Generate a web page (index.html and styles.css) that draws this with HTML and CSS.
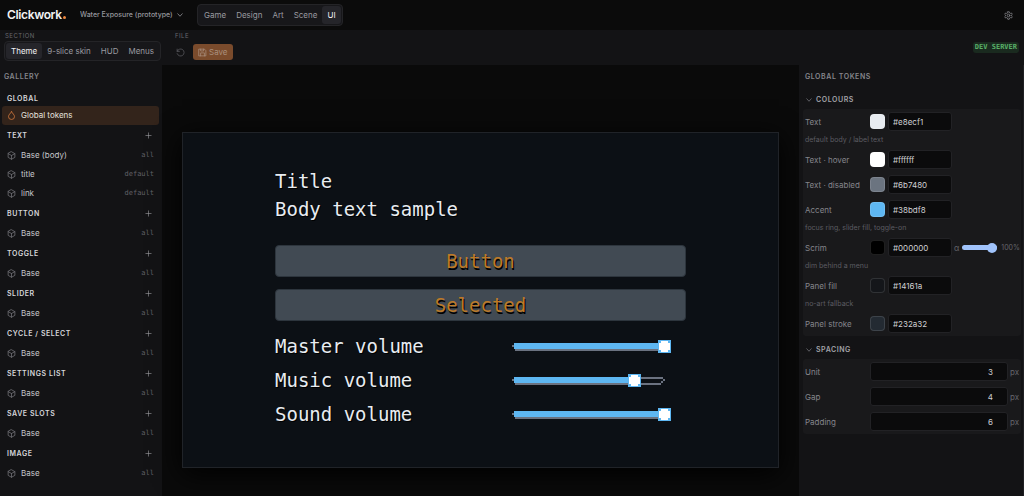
FILE: index.html
```html
<!DOCTYPE html>
<html lang="en">
<head>
    <meta charset="UTF-8">
    <meta name="viewport" content="width=device-width, initial-scale=1.0">
    <title>Clickwork</title>
    <link rel="stylesheet" href="styles.css">
</head>
<body>
    <svg class="defs" width="0" height="0" aria-hidden="true">
        <symbol id="cube" viewBox="0 0 24 24"><path d="M12 2 21 7v10l-9 5-9-5V7z M3 7l9 5 9-5 M12 12v10"/></symbol>
        <symbol id="plus" viewBox="0 0 24 24"><path d="M12 3v18M3 12h18"/></symbol>
        <symbol id="chevron" viewBox="0 0 24 24"><path d="m3 7 9 10 9-10"/></symbol>
    </svg>

    <header class="topbar">
        <div class="logo">Clickwork<span class="dot"></span></div>
        <div class="project">
            <select class="project-select" aria-label="Project">
                <option>Water Exposure (prototype)</option>
            </select>
            <svg class="icon chevron"><use href="#chevron"/></svg>
        </div>
        <nav class="tabs">
            <button class="tab">Game</button>
            <button class="tab">Design</button>
            <button class="tab">Art</button>
            <button class="tab">Scene</button>
            <button class="tab active">UI</button>
        </nav>
        <button class="icon-btn settings" aria-label="Settings">
            <svg class="icon gear" viewBox="0 0 24 24"><path d="M10 2h4l.7 3 2.300 1.300 3-.9 2 3.500L19.800 11v2l2.200 2.100-2 3.500-3-.9-2.300 1.300-.7 3h-4l-.7-3L7 17.700l-3 .9-2-3.500L4.200 13v-2L2 8.900l2-3.500 3 .9L9.300 5z"/><circle cx="12" cy="12" r="3.500"/></svg>
        </button>
    </header>

    <div class="toolbar">
        <div class="tool-group section-group">
            <span class="tool-label">SECTION</span>
            <div class="tabs">
                <button class="tab active">Theme</button>
                <button class="tab">9-slice skin</button>
                <button class="tab">HUD</button>
                <button class="tab">Menus</button>
            </div>
        </div>
        <div class="tool-group">
            <span class="tool-label">FILE</span>
            <div class="file-actions">
                <button class="icon-btn revert" aria-label="Revert">
                    <svg class="icon" viewBox="0 0 24 24"><path d="M3 3v6h6M3 9a9.500 9.500 0 1 1 0 6"/></svg>
                </button>
                <button class="save">
                    <svg class="icon" viewBox="0 0 24 24"><path d="M3 3h14l4 4v14H3zM7 3v5h8V3M7 21v-8h10v8"/></svg>
                    Save
                </button>
            </div>
        </div>
        <span class="badge">DEV SERVER</span>
    </div>

    <div class="workspace">
        <aside class="gallery">
            <h2 class="panel-title">GALLERY</h2>
            <div class="group-head">GLOBAL</div>
            <button class="item selected">
                <svg class="icon" viewBox="0 0 24 24"><path d="M12 2C9 7 4 10 4 15a8 7.500 0 0 0 16 0c0-5-5-8-8-13z"/></svg>
                Global tokens
            </button>

            <div class="group-head">TEXT<button class="add" aria-label="Add text"><svg class="icon"><use href="#plus"/></svg></button></div>
            <button class="item"><svg class="icon"><use href="#cube"/></svg>Base (body)<span class="tag">all</span></button>
            <button class="item"><svg class="icon"><use href="#cube"/></svg>title<span class="tag">default</span></button>
            <button class="item"><svg class="icon"><use href="#cube"/></svg>link<span class="tag">default</span></button>

            <div class="group-head">BUTTON<button class="add" aria-label="Add button"><svg class="icon"><use href="#plus"/></svg></button></div>
            <button class="item"><svg class="icon"><use href="#cube"/></svg>Base<span class="tag">all</span></button>

            <div class="group-head">TOGGLE<button class="add" aria-label="Add toggle"><svg class="icon"><use href="#plus"/></svg></button></div>
            <button class="item"><svg class="icon"><use href="#cube"/></svg>Base<span class="tag">all</span></button>

            <div class="group-head">SLIDER<button class="add" aria-label="Add slider"><svg class="icon"><use href="#plus"/></svg></button></div>
            <button class="item"><svg class="icon"><use href="#cube"/></svg>Base<span class="tag">all</span></button>

            <div class="group-head">CYCLE / SELECT<button class="add" aria-label="Add select"><svg class="icon"><use href="#plus"/></svg></button></div>
            <button class="item"><svg class="icon"><use href="#cube"/></svg>Base<span class="tag">all</span></button>

            <div class="group-head">SETTINGS LIST<button class="add" aria-label="Add settings list"><svg class="icon"><use href="#plus"/></svg></button></div>
            <button class="item"><svg class="icon"><use href="#cube"/></svg>Base<span class="tag">all</span></button>

            <div class="group-head">SAVE SLOTS<button class="add" aria-label="Add save slots"><svg class="icon"><use href="#plus"/></svg></button></div>
            <button class="item"><svg class="icon"><use href="#cube"/></svg>Base<span class="tag">all</span></button>

            <div class="group-head">IMAGE<button class="add" aria-label="Add image"><svg class="icon"><use href="#plus"/></svg></button></div>
            <button class="item"><svg class="icon"><use href="#cube"/></svg>Base<span class="tag">all</span></button>
        </aside>

        <main class="stage">
            <div class="preview">
                <div class="game-text">Title</div>
                <div class="game-text">Body text sample</div>
                <div class="game-buttons">
                    <button class="game-btn">Button</button>
                    <button class="game-btn">Selected</button>
                </div>
                <div class="game-row">
                    <label for="master">Master volume</label>
                    <input id="master" class="game-slider" type="range" value="100" style="--value: 1">
                </div>
                <div class="game-row">
                    <label for="music">Music volume</label>
                    <input id="music" class="game-slider" type="range" value="80" style="--value: 0.8">
                </div>
                <div class="game-row">
                    <label for="sound">Sound volume</label>
                    <input id="sound" class="game-slider" type="range" value="100" style="--value: 1">
                </div>
            </div>
        </main>

        <aside class="inspector">
            <h2 class="panel-title">GLOBAL TOKENS</h2>

            <button class="fold"><svg class="icon chevron"><use href="#chevron"/></svg>COLOURS</button>
            <div class="fields">
                <div class="field">
                    <label for="text">Text</label>
                    <input class="swatch" type="color" value="#e8ecf1" aria-label="Text colour">
                    <input id="text" class="hex" type="text" value="#e8ecf1">
                </div>
                <p class="hint">default body / label text</p>
                <div class="field">
                    <label for="hover">Text · hover</label>
                    <input class="swatch" type="color" value="#ffffff" aria-label="Hover colour">
                    <input id="hover" class="hex" type="text" value="#ffffff">
                </div>
                <div class="field">
                    <label for="disabled">Text · disabled</label>
                    <input class="swatch" type="color" value="#6b7480" aria-label="Disabled colour">
                    <input id="disabled" class="hex" type="text" value="#6b7480">
                </div>
                <div class="field">
                    <label for="accent">Accent</label>
                    <input class="swatch" type="color" value="#5eb7f2" aria-label="Accent colour">
                    <input id="accent" class="hex" type="text" value="#38bdf8">
                </div>
                <p class="hint">focus ring, slider fill, toggle-on</p>
                <div class="field">
                    <label for="scrim">Scrim</label>
                    <input class="swatch" type="color" value="#000000" aria-label="Scrim colour">
                    <input id="scrim" class="hex" type="text" value="#000000">
                    <label class="unit" for="alpha">α</label>
                    <input id="alpha" class="alpha" type="range" value="100">
                    <span class="unit">100%</span>
                </div>
                <p class="hint">dim behind a menu</p>
                <div class="field">
                    <label for="fill">Panel fill</label>
                    <input class="swatch" type="color" value="#14161a" aria-label="Panel fill colour">
                    <input id="fill" class="hex" type="text" value="#14161a">
                </div>
                <p class="hint">no-art fallback</p>
                <div class="field">
                    <label for="stroke">Panel stroke</label>
                    <input class="swatch" type="color" value="#232a32" aria-label="Panel stroke colour">
                    <input id="stroke" class="hex" type="text" value="#232a32">
                </div>
            </div>

            <button class="fold"><svg class="icon chevron"><use href="#chevron"/></svg>SPACING</button>
            <div class="fields">
                <div class="field">
                    <label for="unit">Unit</label>
                    <input id="unit" class="number" type="number" value="3">
                    <span class="unit">px</span>
                </div>
                <div class="field">
                    <label for="gap">Gap</label>
                    <input id="gap" class="number" type="number" value="4">
                    <span class="unit">px</span>
                </div>
                <div class="field">
                    <label for="padding">Padding</label>
                    <input id="padding" class="number" type="number" value="6">
                    <span class="unit">px</span>
                </div>
            </div>
        </aside>
    </div>
</body>
</html>
```

FILE: styles.css
```css
* {
    margin: 0;
    padding: 0;
    box-sizing: border-box;
}
body {
    display: flex;
    flex-direction: column;
    height: 100vh;
    overflow: hidden;
    background: #0b0b0b;
    color: #d6d6da;
    font: 8px/10px Inter, sans-serif;
}
button, input, select {
    font: inherit;
    color: inherit;
    border: none;
    background: none;
    outline: none;
}
button {
    cursor: pointer;
}
.defs {
    position: absolute;
}
.icon {
    width: 9px;
    height: 9px;
    flex: none;
    fill: none;
    stroke: currentColor;
    stroke-width: 2;
    stroke-linecap: round;
    stroke-linejoin: round;
}
.icon.chevron {
    width: 6px;
    height: 6px;
    stroke-width: 3;
}
.icon-btn {
    display: flex;
    color: #8c8c92;
}

/* top bar */
.topbar {
    display: flex;
    align-items: center;
    height: 30px;
    flex: none;
    padding: 0 11px 0 7px;
}
.logo {
    display: flex;
    align-items: baseline;
    width: 73px;
    font-size: 12px;
    line-height: 16px;
    font-weight: 600;
    letter-spacing: -0.03em;
    color: #f2f2f2;
}
.dot {
    width: 3px;
    height: 3px;
    margin: 0 0 -2px 1px;
    border-radius: 50%;
    background: #f0883e;
}
.project {
    display: flex;
    align-items: center;
    gap: 4px;
    width: 117px;
    font-size: 7px;
    font-weight: 500;
    color: #97979d;
}
.project-select {
    appearance: none;
}
.tabs {
    display: flex;
    padding: 1px;
    border: 1px solid #242427;
    border-radius: 4px;
    background: #17171a;
}
.tab {
    padding: 3px 5px;
    border-radius: 3px;
    color: #9a9aa0;
    white-space: nowrap;
}
.tab.active {
    background: #25252a;
    color: #f2f2f5;
}
.topbar .tab {
    padding: 4px 5px;
}
.settings {
    margin-left: auto;
}

/* toolbar */
.toolbar {
    display: flex;
    height: 35px;
    flex: none;
    padding: 1px 4px 0;
    background: #131315;
}
.tool-group {
    display: flex;
    flex-direction: column;
    align-items: flex-start;
}
.section-group {
    width: 170px;
}
.tool-label {
    padding-left: 1px;
    font-size: 6px;
    line-height: 10px;
    letter-spacing: 0.08em;
    color: #67676d;
}
.file-actions {
    display: flex;
    align-items: center;
    gap: 8px;
    padding: 3px 2px;
}
.revert {
    color: #5c5c61;
}
.save {
    display: flex;
    align-items: center;
    gap: 2px;
    height: 16px;
    padding: 0 5px;
    border-radius: 3px;
    background: #7a4b2c;
    color: #a98f7d;
}
.badge {
    align-self: flex-start;
    margin: 11px 1px 0 auto;
    padding: 0 2px;
    border-radius: 3px;
    background: #1a2a1f;
    color: #58b068;
    font: bold 7px/11px "DejaVu Sans Mono", monospace;
}

/* columns */
.workspace {
    display: flex;
    flex: 1;
    min-height: 0;
}
.gallery {
    width: 162px;
    flex: none;
    padding: 7px 3px 0 2px;
    background: #131315;
}
.panel-title {
    padding-left: 2px;
    font-size: 7px;
    line-height: 10px;
    font-weight: 600;
    letter-spacing: 0.08em;
    color: #85858b;
}
.gallery .panel-title {
    margin-bottom: 9px;
}
.group-head {
    display: flex;
    align-items: center;
    justify-content: space-between;
    padding: 0 7px 0 5px;
    font-size: 7px;
    line-height: 15px;
    font-weight: 600;
    letter-spacing: 0.08em;
    color: #d6d6da;
}
.add {
    display: flex;
    padding: 7px 0;
    color: #a0a0a6;
}
.add .icon {
    width: 7px;
    height: 7px;
}
.item {
    display: flex;
    align-items: center;
    gap: 5px;
    width: 100%;
    height: 19px;
    padding: 0 5px 1px;
    border-radius: 3px;
    text-align: left;
    color: #c6c6ca;
}
.item .icon {
    color: #75757b;
}
.item.selected {
    background: #33241b;
    color: #e4e0dd;
}
.item.selected .icon {
    color: #e08040;
}
.tag {
    margin-left: auto;
    font: 7px/10px "DejaVu Sans Mono", monospace;
    color: #606066;
}

/* preview */
.stage {
    flex: 1;
    min-width: 0;
    padding: 67px 20px;
    background: #0a0a0a;
}
.preview {
    aspect-ratio: 16 / 9;
    padding: 34px 92px 0;
    border: 1px solid #202328;
    background: #0c1015;
    box-shadow: 0 6px 26px #000000;
    color: #e8ecf1;
    font: 19px/28px "DejaVu Sans Mono", monospace;
    text-shadow: 1px 1px 0 #000000;
}
.game-buttons {
    display: flex;
    flex-direction: column;
    gap: 12px;
    margin: 22px 0 8px;
}
.game-btn {
    height: 32px;
    border: 1px solid #2d353d;
    border-radius: 4px;
    background: #414a53;
    color: #bd7a27;
    text-shadow: 1px 2px 0 #000000;
}
.game-row {
    display: flex;
    align-items: center;
    justify-content: space-between;
    height: 34px;
    padding-right: 15px;
}
.game-slider {
    appearance: none;
    width: 165px;
    height: 13px;
    background:
        linear-gradient(#5eb7f2, #5eb7f2) 8px 3px / calc((100% - 14px) * var(--value)) 6px no-repeat,
        linear-gradient(#6b7280, #6b7280) 8px 3px / 149px 2px no-repeat,
        linear-gradient(#6b7280, #6b7280) 9px 9px / 146px 2px no-repeat,
        linear-gradient(#6b7280, #6b7280) 6px 5px / 2px 2px no-repeat,
        linear-gradient(#6b7280, #6b7280) 157px 5px / 2px 2px no-repeat,
        linear-gradient(#6b7280, #6b7280) 155px 7px / 2px 2px no-repeat;
}
.game-slider::-webkit-slider-thumb {
    appearance: none;
    width: 13px;
    height: 13px;
    border: 1px solid #5eb7f2;
    background:
        linear-gradient(#ffffff, #ffffff) center / 7px 11px no-repeat,
        linear-gradient(#ffffff, #ffffff) center / 11px 7px no-repeat,
        #5eb7f2;
}

/* inspector */
.inspector {
    width: 225px;
    flex: none;
    padding: 7px 2px 0 4px;
    border-right: 1px solid #1f1f22;
    background: #131315;
}
.inspector .panel-title {
    margin-bottom: 13px;
}
.fold {
    display: flex;
    align-items: center;
    gap: 4px;
    padding: 0 3px;
    font-size: 7px;
    line-height: 10px;
    font-weight: 600;
    letter-spacing: 0.08em;
    color: #a2a2a8;
}
.fold .icon {
    color: #77777d;
}
.fields {
    margin: 4px 0 9px;
    border-radius: 3px;
    background: #19191b;
}
.field {
    display: flex;
    align-items: center;
    height: 25px;
    padding: 0 2px;
    color: #85858b;
}
.field label:first-child {
    width: 65px;
    flex: none;
}
.swatch {
    width: 15px;
    height: 15px;
    flex: none;
    margin-right: 3px;
    appearance: none;
}
.swatch::-webkit-color-swatch-wrapper {
    padding: 0;
}
.swatch::-webkit-color-swatch {
    border: 1px solid rgba(255, 255, 255, 0.12);
    border-radius: 4px;
}
.hex, .number {
    height: 19px;
    border: 1px solid #222225;
    border-radius: 3px;
    background: #0b0b0c;
    color: #cfcfd3;
}
.hex {
    width: 64px;
    padding: 0 4px;
}
.number {
    flex: 1;
    min-width: 0;
    padding-right: 14px;
    margin-right: 2px;
    text-align: right;
    appearance: textfield;
}
.number::-webkit-inner-spin-button {
    appearance: none;
}
.unit {
    color: #65656b;
}
.field label.unit {
    margin: 0 3px 0 2px;
}
.alpha {
    appearance: none;
    width: 35px;
    height: 5px;
    margin-right: 4px;
    border-radius: 3px;
    background: #a0c3fb;
}
.alpha::-webkit-slider-thumb {
    appearance: none;
    width: 10px;
    height: 10px;
    border-radius: 50%;
    background: #a0c3fb;
}
.alpha + .unit {
    font-size: 7px;
}
.hint {
    padding: 1px 2px 2px;
    font-size: 7px;
    line-height: 10px;
    color: #5c5c62;
}
```
